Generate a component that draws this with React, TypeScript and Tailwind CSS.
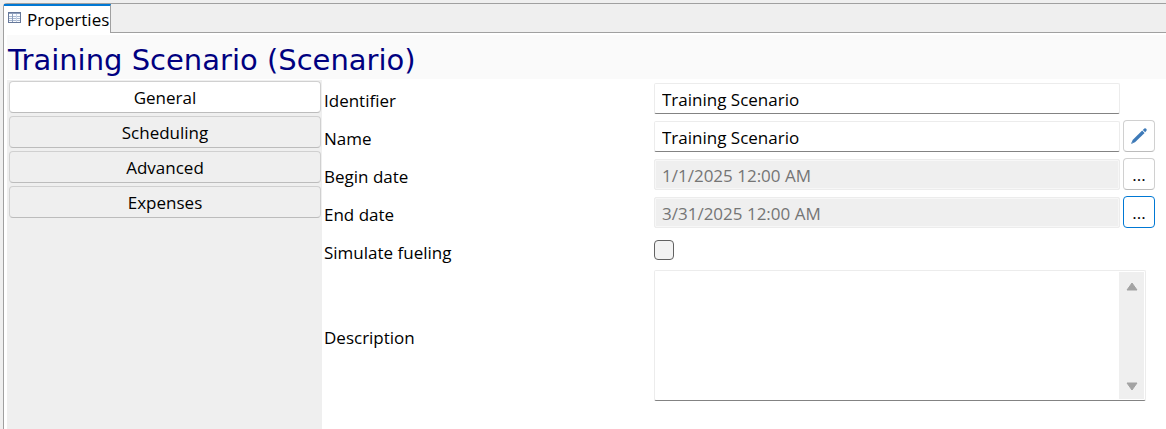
import type { ReactNode } from "react";

const pages = ["General", "Scheduling", "Advanced", "Expenses"];

const editable =
  "h-[31px] w-full min-w-0 flex-1 rounded-[2px] border border-[#ececec] border-b-[#838383] bg-white px-[7px] pt-0.5 outline-none";
const readOnly =
  "h-[31px] w-full min-w-0 flex-1 rounded-[2px] border border-[#ececec] bg-[#efefef] px-[7px] pt-0.5 text-[#757575] shadow-[inset_0_0_0_1px_#f7f7f7] outline-none";

function TableIcon() {
  return (
    <svg viewBox="0 0 13 11" className="mb-1 h-[11px] w-[13px]" shapeRendering="crispEdges" aria-hidden="true">
      <rect width="13" height="11" fill="#66789a" />
      <rect x="1" y="1" width="11" height="1" fill="#8fa0bd" />
      <rect x="1" y="2" width="11" height="8" fill="#fafcff" />
      <path d="M1 4.5h11M1 6.5h11M1 8.5h11" stroke="#a9b8d0" />
      <path d="M4.5 2v8" stroke="#8fa0bd" />
      <path d="M8.5 2v8" stroke="#c6d2e4" />
    </svg>
  );
}

function PencilIcon() {
  return (
    <svg viewBox="0 0 18 18" className="h-[18px] w-[18px]" aria-hidden="true">
      <path d="M1.2 16.8L2.6 13L12.2 3.6L14.6 6L5 15.3Z" fill="#3e7ab8" />
      <path d="M12.8 3L14.3 1.5Q15.3 .8 16.2 1.7T16.6 3.6L15.2 5.3Z" fill="#3e7ab8" />
      <path d="M1 17L1.8 14.8L3.2 16.2Z" fill="#8aa9c8" />
    </svg>
  );
}

function ArrowIcon({ down = false }: { down?: boolean }) {
  return (
    <svg viewBox="0 0 12 9" className={down ? "h-[9px] w-3 rotate-180" : "h-[9px] w-3"} aria-hidden="true">
      <path d="M6 1L11 8H1Z" fill="#a3a3a3" stroke="#a3a3a3" strokeLinejoin="round" />
    </svg>
  );
}

function Row({ id, label, children }: { id: string; label: string; children: ReactNode }) {
  return (
    <div className="flex h-[38px] items-end pb-[3px]">
      <label htmlFor={id} className="w-[330px] shrink-0 leading-[26px]">
        {label}
      </label>
      {children}
    </div>
  );
}

function SideButton({ label, active, children }: { label: string; active?: boolean; children: ReactNode }) {
  return (
    <button
      type="button"
      aria-label={label}
      className={`flex h-8 w-8 shrink-0 items-center justify-center rounded border bg-white ${
        active ? "border-[#0078d4]" : "border-[#d0d0d0] border-b-[#bcbcbc]"
      }`}
    >
      {children}
    </button>
  );
}

export default function App() {
  return (
    <div className="flex min-h-screen flex-col bg-[#efefef] pl-[3px] pt-[3px] font-['Open_Sans','Noto_Sans',sans-serif] text-[17px] text-black">
      <div className="flex flex-1 flex-col rounded-tl border-l border-t border-[#a0a0a0] bg-white">
        <div className="flex h-[29px]" role="tablist">
          <button
            type="button"
            role="tab"
            aria-selected="true"
            className="flex items-center gap-1.5 border-r border-t-2 border-r-[#a0a0a0] border-t-[#0078d4] bg-white pl-1 pr-px"
          >
            <TableIcon />
            <span className="leading-6">Properties</span>
          </button>
          <div className="flex-1 border-b border-[#a0a0a0] bg-[#efefef]" />
        </div>

        <header className="ml-[3px] mt-0.5 h-11 bg-[#fafafa]">
          <h1 className="pl-px pt-[7px] font-['DejaVu_Sans',sans-serif] text-[29px] leading-9 text-[#000080]">
            Training Scenario (Scenario)
          </h1>
        </header>

        <div className="ml-[3px] flex flex-1">
          <nav className="mt-px flex w-[315px] shrink-0 flex-col gap-[3px] bg-[#efefef] py-px pl-0.5 pr-px">
            {pages.map((page, i) => (
              <button
                key={page}
                type="button"
                className={`h-8 rounded border border-[#d0d0d0] border-b-[#bcbcbc] pt-0.5 leading-6 ${
                  i === 0 ? "bg-white" : "bg-[#efefef]"
                }`}
              >
                {page}
              </button>
            ))}
          </nav>

          <form className="min-w-0 flex-1 pl-0.5 pr-[11px]">
            <Row id="identifier" label="Identifier">
              <input id="identifier" className={editable} defaultValue="Training Scenario" />
              <div className="w-[35px] shrink-0" />
            </Row>
            <Row id="name" label="Name">
              <div className="flex flex-1 items-end gap-[3px]">
                <input id="name" className={editable} defaultValue="Training Scenario" />
                <SideButton label="Edit name">
                  <PencilIcon />
                </SideButton>
              </div>
            </Row>
            <Row id="begin" label="Begin date">
              <div className="flex flex-1 items-end gap-[3px]">
                <input id="begin" readOnly className={readOnly} value="1/1/2025 12:00 AM" />
                <SideButton label="Choose begin date">
                  <span className="pt-0.5">...</span>
                </SideButton>
              </div>
            </Row>
            <Row id="end" label="End date">
              <div className="flex flex-1 items-end gap-[3px]">
                <input id="end" readOnly className={readOnly} value="3/31/2025 12:00 AM" />
                <SideButton label="Choose end date" active>
                  <span className="pt-0.5">...</span>
                </SideButton>
              </div>
            </Row>
            <Row id="fueling" label="Simulate fueling">
              <div className="flex h-8 items-center">
                <input
                  id="fueling"
                  type="checkbox"
                  className="size-5 appearance-none rounded border border-[#626262] bg-[#f3f3f3]"
                />
              </div>
            </Row>
            <div className="flex items-center pr-[9px] pt-px">
              <label htmlFor="description" className="w-[330px] shrink-0 pt-1 leading-6">
                Description
              </label>
              <div className="flex flex-1 rounded-[2px] border border-[#ececec] border-b-[#838383] p-px">
                <textarea
                  id="description"
                  className="block h-[127px] min-w-0 flex-1 resize-none bg-white px-1.5 outline-none"
                />
                <div className="flex w-[25px] flex-col items-center justify-between bg-[#efefef] pb-2 pt-2.5">
                  <button type="button" aria-label="Scroll up">
                    <ArrowIcon />
                  </button>
                  <button type="button" aria-label="Scroll down">
                    <ArrowIcon down />
                  </button>
                </div>
              </div>
            </div>
          </form>
        </div>
      </div>
    </div>
  );
}
